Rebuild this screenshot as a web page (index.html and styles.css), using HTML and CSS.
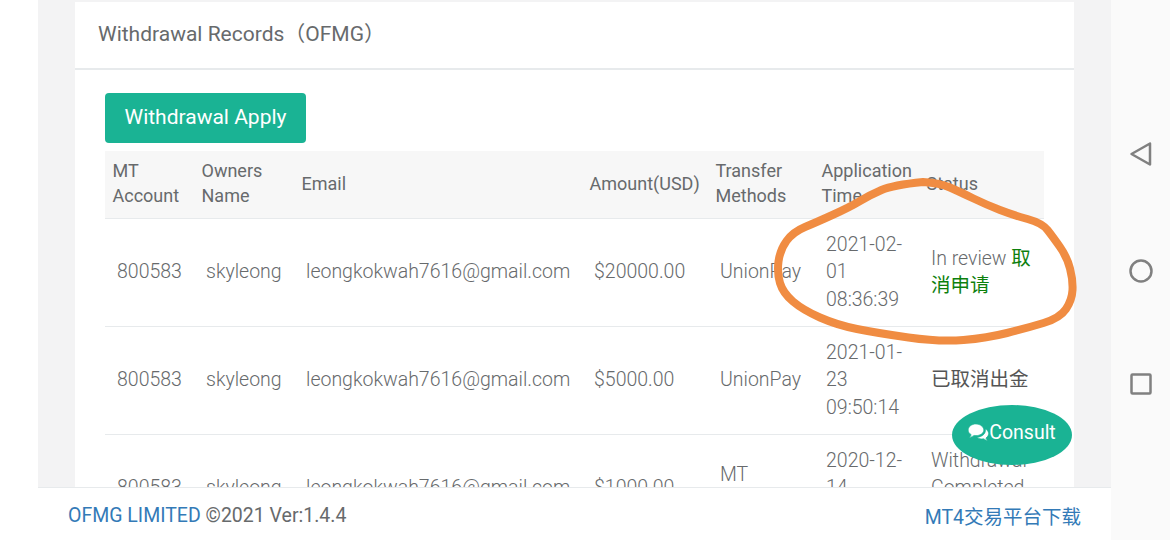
FILE: index.html
```html
<!DOCTYPE html>
<html lang="en">
<head>
    <meta charset="UTF-8">
    <meta name="viewport" content="width=device-width, initial-scale=1.0">
    <title>Withdrawal Records</title>
    <link rel="stylesheet" href="styles.css">
</head>
<body>
    <div class="edge"></div>
    <div class="app">
        <div class="main">
            <div class="card">
                <div class="card-title">Withdrawal Records（OFMG）</div>
                <div class="card-body">
                    <a class="btn-apply" href="#">Withdrawal Apply</a>
                    <table class="records">
                        <colgroup>
                            <col class="c-account">
                            <col class="c-owner">
                            <col class="c-email">
                            <col class="c-amount">
                            <col class="c-method">
                            <col class="c-time">
                            <col class="c-status">
                        </colgroup>
                        <thead>
                            <tr>
                                <th>MT Account</th>
                                <th>Owners Name</th>
                                <th>Email</th>
                                <th>Amount(USD)</th>
                                <th>Transfer Methods</th>
                                <th>Application Time</th>
                                <th>Status</th>
                            </tr>
                        </thead>
                        <tbody>
                            <tr>
                                <td>800583</td>
                                <td>skyleong</td>
                                <td>leongkokwah7616@gmail.com</td>
                                <td>$20000.00</td>
                                <td>UnionPay</td>
                                <td>2021-02-01 08:36:39</td>
                                <td>In review <a class="cancel" href="#">取消申请</a></td>
                            </tr>
                            <tr>
                                <td>800583</td>
                                <td>skyleong</td>
                                <td>leongkokwah7616@gmail.com</td>
                                <td>$5000.00</td>
                                <td>UnionPay</td>
                                <td>2021-01-23 09:50:14</td>
                                <td class="dark">已取消出金</td>
                            </tr>
                            <tr>
                                <td>800583</td>
                                <td>skyleong</td>
                                <td>leongkokwah7616@gmail.com</td>
                                <td>$1000.00</td>
                                <td>MT Transfer</td>
                                <td>2020-12-14 10:22:31</td>
                                <td>Withdrawal Completed<br>&nbsp;</td>
                            </tr>
                        </tbody>
                    </table>
                </div>
            </div>
            <a class="consult" href="#">
                <svg class="consult-icon" viewBox="0 0 21 17" width="21" height="17">
                    <path class="bubble" d="M20.6 9.6c0-2-1.300-3.700-3.300-4.700.1.400.2.900.2 1.300 0 3.900-3.900 6.900-8.600 7.100 1.100 1 2.800 1.600 4.700 1.600.7 0 1.300-.1 1.900-.2 1 .7 2.200 1.400 3.900 1.800-.5-.7-1.100-1.500-1.500-2.500 1.600-1 2.700-2.600 2.700-4.400z"/>
                    <path class="bubble" d="M8 0C3.700 0 .2 2.700.2 6c0 1.900 1.200 3.600 3 4.700-.3.900-.9 1.800-1.700 2.700 1.900-.3 3.300-1.100 4.500-2 .6.100 1.300.2 2 .2 4.300 0 7.800-2.600 7.800-5.600S12.300 0 8 0z"/>
                </svg>Consult
            </a>
        </div>
        <div class="footer">
            <div><a href="#">OFMG LIMITED</a> ©2021 Ver:1.4.4</div>
            <a href="#">MT4交易平台下载</a>
        </div>
    </div>
    <div class="navbar">
        <svg width="24" height="26" viewBox="0 0 24 26"><path class="nav-icon" d="M21 2.500 2.500 13 21 23.500z"/></svg>
        <svg width="26" height="26" viewBox="0 0 26 26"><circle class="nav-icon" cx="13" cy="13" r="10.500"/></svg>
        <svg class="nav-square" width="24" height="24" viewBox="0 0 24 24"><rect class="nav-icon" x="2.500" y="2.500" width="19" height="19" rx="1"/></svg>
    </div>
    <!-- hand drawn circle on top of the screenshot -->
    <svg class="scribble" viewBox="0 0 1170 540" width="1170" height="540">
        <path d="M923 182Q893 185 881.500 190Q870 195 860 201Q850 207 833.500 214.500Q817 222 805 227Q793 232 786.500 241Q780 250 778.500 261.500Q777 273 780 283Q783 293 793 301.500Q803 310 820 317.500Q837 325 857 329Q877 333 908.500 337.500Q940 342 963.500 340Q987 338 1007 333Q1027 328 1043.500 323Q1060 318 1066 309Q1072 300 1072.500 290Q1073 280 1070 268.500Q1067 257 1060 247Q1053 237 1047.500 230Q1042 223 1027.500 219Q1013 215 1000 210Q987 205 973.500 198.500Q960 192 950 187.500Q940 183 923 182Z"/>
    </svg>
</body>
</html>
```

FILE: styles.css
```css
html, body {
    margin: 0;
    padding: 0;
    height: 540px;
    overflow: hidden;
}
body {
    display: flex;
    position: relative;
    background-color: #fff;
    font-family: Roboto, "Noto Sans CJK SC", sans-serif;
    font-size: 18px;
    color: #676a6c;
}
a {
    text-decoration: none;
}
.edge {
    width: 38px;
}
.app {
    width: 1073px;
    display: flex;
    flex-direction: column;
}
.main {
    position: relative;
    height: 487px;
    overflow: hidden;
    padding: 2px 37px 0;
    box-sizing: border-box;
    background-color: #f3f3f4;
}
.card {
    background-color: #fff;
    min-height: 600px;
}
.card-title {
    height: 68px;
    line-height: 64px;
    padding-left: 23px;
    font-size: 21px;
    color: #676a6c;
    border-bottom: 2px solid #e7eaec;
    box-sizing: border-box;
}
.card-body {
    padding: 23px 30px 0;
}
.btn-apply {
    display: block;
    width: 201px;
    height: 50px;
    line-height: 49px;
    text-align: center;
    font-size: 21px;
    color: #fff;
    background-color: #1ab394;
    border-radius: 4px;
}
.records {
    width: 939px;
    margin-top: 8px;
    border-collapse: collapse;
    table-layout: fixed;
}
.c-account { width: 89px; }
.c-owner { width: 100px; }
.c-email { width: 288px; }
.c-amount { width: 126px; }
.c-method { width: 106px; }
.c-time { width: 105px; }
.c-status { width: 125px; }
.records th {
    height: 67px;
    padding: 0 8px 2px 7.500px;
    box-sizing: border-box;
    background-color: #f7f7f7;
    border-bottom: 1px solid #e7eaec;
    font-weight: 400;
    line-height: 25px;
    text-align: left;
}
.records td {
    height: 108px;
    padding: 0 12px;
    box-sizing: border-box;
    border-bottom: 1px solid #e7eaec;
    font-size: 19.500px;
    font-weight: 300;
    line-height: 27.500px;
}
.records td.dark {
    font-weight: 400;
    color: #555;
}
.cancel {
    color: #0d800d;
    font-weight: 400;
}
.consult {
    position: absolute;
    left: 914px;
    top: 405px;
    width: 120px;
    height: 60px;
    padding-bottom: 6px;
    box-sizing: border-box;
    border-radius: 50%;
    background-color: #1ab394;
    color: #fff;
    font-size: 19.500px;
    display: flex;
    align-items: center;
    justify-content: center;
}
.bubble {
    fill: #fff;
    stroke: #1ab394;
    stroke-width: .6;
}
.footer {
    height: 53px;
    padding: 3px 30px 0;
    box-sizing: border-box;
    display: flex;
    justify-content: space-between;
    align-items: center;
    background-color: #fff;
    border-top: 1px solid #e7eaec;
    font-size: 19.500px;
    color: #676a6c;
}
.footer a {
    color: #337ab7;
}
.navbar {
    width: 59px;
    background-color: #fafafa;
    display: flex;
    flex-direction: column;
    align-items: center;
    padding-top: 141px;
    gap: 91px;
    box-sizing: border-box;
}
.nav-square {
    margin-top: -3px;
}
.nav-icon {
    fill: none;
    stroke: #808080;
    stroke-width: 2.500;
    stroke-linejoin: round;
}
.scribble {
    position: absolute;
    left: 0;
    top: 0;
    pointer-events: none;
}
.scribble path {
    fill: none;
    stroke: #f08c42;
    stroke-width: 8;
    stroke-linejoin: round;
}
```
